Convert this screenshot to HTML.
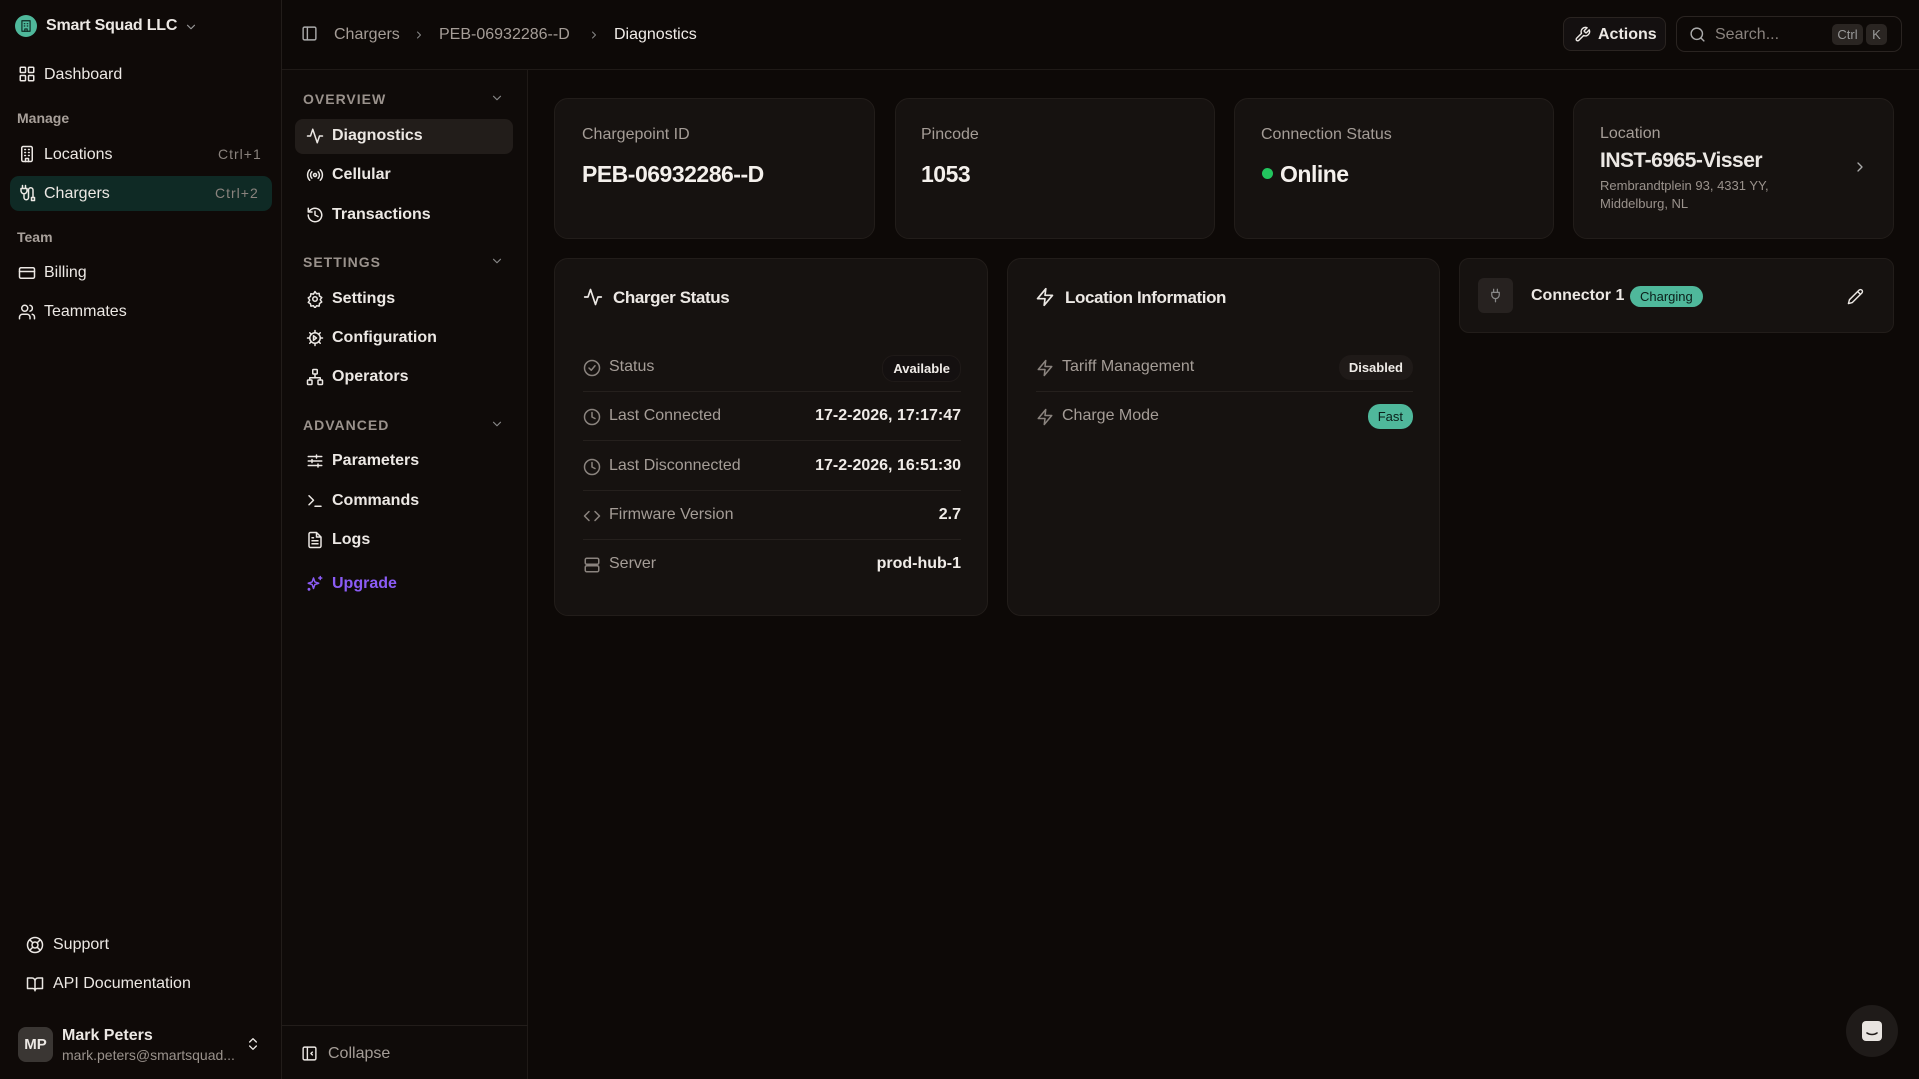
<!DOCTYPE html>
<html><head><meta charset="utf-8">
<style>
*{box-sizing:border-box;margin:0;padding:0}
html,body{width:1919px;height:1079px;overflow:hidden;background:#0d0907;font-family:"Liberation Sans",sans-serif;color:#ece8e4}
.a{position:absolute}
svg.i{position:absolute;width:18px;height:18px;fill:none;stroke:currentColor;stroke-width:2;stroke-linecap:round;stroke-linejoin:round}
.nav{font-size:16px;color:#ece8e4;white-space:nowrap}
.grp{font-size:14px;color:#a8a09a;font-weight:bold}
.sec{font-size:14px;color:#9a928c;letter-spacing:1px;font-weight:bold}
.kbd{font-size:14px;color:#8a837e;letter-spacing:1px}
.card{position:absolute;background:#161210;border:1px solid #221d1a;border-radius:14px}
.lbl{position:absolute;font-size:16px;color:#a59d97}
.val{position:absolute;font-size:23px;font-weight:bold;color:#f4f0ec;letter-spacing:-0.5px}
.row{position:absolute;left:28px;right:26px;height:49px;border-bottom:1px solid #25201d}
.row .t{position:absolute;left:26px;top:15px;font-size:16px;color:#a59d97}
.row svg.i{left:0;top:16px;color:#8a837e}
.row .v{position:absolute;right:0;top:15px;font-size:16px;font-weight:bold;color:#f0ece8}
.badge{position:absolute;right:0;top:12px;font-size:13px;font-weight:bold;padding:5px 10px;border-radius:12px;background:#1f1a18;color:#f0ece8}
</style></head><body>
<!-- sidebar 1 -->
<div class="a" style="left:0;top:0;width:282px;height:1079px;background:#0f0a08;border-right:1px solid #221d1a"></div>
<div class="a" style="left:15px;top:15px;width:22px;height:22px;border-radius:50%;background:#4fb89b"></div>
<svg class="i" style="left:19px;top:19px;width:14px;height:14px;color:#0f2a24" viewBox="0 0 24 24"><rect x="5" y="3" width="14" height="18"/><path d="M9 8h1M14 8h1M9 12h1M14 12h1M10 21v-4h4v4"/></svg>
<div class="a" style="left:46px;top:17px;font-size:16px;font-weight:bold;letter-spacing:-0.2px">Smart Squad LLC</div>
<svg class="i" style="left:184px;top:20px;width:14px;height:14px;color:#999" viewBox="0 0 24 24"><path d="M6 9l6 6 6-6"/></svg>

<svg class="i" style="left:18px;top:65px" viewBox="0 0 24 24"><rect x="3" y="3" width="7" height="7" rx="1"/><rect x="14" y="3" width="7" height="7" rx="1"/><rect x="3" y="14" width="7" height="7" rx="1"/><rect x="14" y="14" width="7" height="7" rx="1"/></svg>
<div class="a nav" style="left:44px;top:66px">Dashboard</div>
<div class="a grp" style="left:17px;top:110px">Manage</div>
<svg class="i" style="left:18px;top:145px" viewBox="0 0 24 24"><rect x="5" y="2" width="14" height="20" rx="2"/><path d="M9 6h1M14 6h1M9 10h1M14 10h1M9 14h1M14 14h1M10 22v-4h4v4"/></svg>
<div class="a nav" style="left:44px;top:146px">Locations</div>
<div class="a kbd" style="left:218px;top:146px">Ctrl+1</div>
<div class="a" style="left:10px;top:176px;width:262px;height:35px;border-radius:9px;background:#0f2a25"></div>
<svg class="i" style="left:18px;top:184px" viewBox="0 0 24 24"><path d="M6 2v4M10 2v4M4 6h8v3a4 4 0 0 1-8 0zM8 13v5a3 3 0 0 0 6 0V8a3 3 0 0 1 6 0v10M18 18h4v4h-4z"/></svg>
<div class="a nav" style="left:44px;top:185px">Chargers</div>
<div class="a kbd" style="left:215px;top:185px">Ctrl+2</div>
<div class="a grp" style="left:17px;top:229px">Team</div>
<svg class="i" style="left:18px;top:264px" viewBox="0 0 24 24"><rect x="2" y="5" width="20" height="14" rx="2"/><path d="M2 10h20"/></svg>
<div class="a nav" style="left:44px;top:264px">Billing</div>
<svg class="i" style="left:18px;top:303px" viewBox="0 0 24 24"><circle cx="9" cy="7" r="4"/><path d="M2 21v-2a4 4 0 0 1 4-4h6a4 4 0 0 1 4 4v2M16 3.1a4 4 0 0 1 0 7.8M22 21v-2a4 4 0 0 0-3-3.9"/></svg>
<div class="a nav" style="left:44px;top:303px">Teammates</div>

<svg class="i" style="left:26px;top:936px" viewBox="0 0 24 24"><circle cx="12" cy="12" r="10"/><circle cx="12" cy="12" r="4"/><path d="M5 5l4 4M15 15l4 4M15 9l4-4M5 19l4-4"/></svg>
<div class="a nav" style="left:53px;top:936px">Support</div>
<svg class="i" style="left:26px;top:975px" viewBox="0 0 24 24"><path d="M2 4h6a4 4 0 0 1 4 4v13a3 3 0 0 0-3-3H2zM22 4h-6a4 4 0 0 0-4 4v13a3 3 0 0 1 3-3h7z"/></svg>
<div class="a nav" style="left:53px;top:975px">API Documentation</div>
<div class="a" style="left:18px;top:1027px;width:35px;height:35px;border-radius:8px;background:#3a3633;font-size:15px;font-weight:bold;text-align:center;line-height:35px">MP</div>
<div class="a" style="left:62px;top:1027px;font-size:16px;font-weight:bold">Mark Peters</div>
<div class="a" style="left:62px;top:1047px;font-size:14px;color:#9a928c">mark.peters@smartsquad...</div>
<svg class="i" style="left:245px;top:1036px;width:16px;height:16px" viewBox="0 0 24 24"><path d="M7 9l5-5 5 5M7 15l5 5 5-5"/></svg>

<!-- sidebar 2 -->
<div class="a" style="left:282px;top:69px;width:246px;height:1010px;background:#0f0b09;border-right:1px solid #1f1a17"></div>
<div class="a" style="left:282px;top:1025px;width:246px;height:1px;background:#221d1a"></div>
<div class="a sec" style="left:303px;top:91px">OVERVIEW</div>
<svg class="i" style="left:490px;top:91px;width:14px;height:14px;color:#888" viewBox="0 0 24 24"><path d="M6 9l6 6 6-6"/></svg>
<div class="a" style="left:295px;top:119px;width:218px;height:35px;border-radius:8px;background:#221d1a"></div>
<svg class="i" style="left:306px;top:127px" viewBox="0 0 24 24"><path d="M22 12h-4l-3 9L9 3l-3 9H2"/></svg>
<div class="a nav" style="left:332px;top:127px;font-weight:bold">Diagnostics</div>
<svg class="i" style="left:306px;top:166px" viewBox="0 0 24 24"><circle cx="12" cy="12" r="2"/><path d="M16.2 7.8a6 6 0 0 1 0 8.5M7.8 16.2a6 6 0 0 1 0-8.5M19 5a10 10 0 0 1 0 14M5 19A10 10 0 0 1 5 5"/></svg>
<div class="a nav" style="left:332px;top:166px;font-weight:bold">Cellular</div>
<svg class="i" style="left:306px;top:206px" viewBox="0 0 24 24"><path d="M3 12a9 9 0 1 0 3-6.7L3 8M3 3v5h5M12 7v5l4 2"/></svg>
<div class="a nav" style="left:332px;top:206px;font-weight:bold">Transactions</div>
<div class="a sec" style="left:303px;top:254px">SETTINGS</div>
<svg class="i" style="left:490px;top:254px;width:14px;height:14px;color:#888" viewBox="0 0 24 24"><path d="M6 9l6 6 6-6"/></svg>
<svg class="i" style="left:306px;top:290px" viewBox="0 0 24 24"><circle cx="12" cy="12" r="3"/><path d="M12 2l2 3 3.5-.5.5 3.5 3 2-2 3 2 3-3 2-.5 3.5-3.5-.5-2 3-2-3-3.5.5L6 18.5 3 16.5l2-3-2-3 3-2L6.5 5 10 5.5z"/></svg>
<div class="a nav" style="left:332px;top:290px;font-weight:bold">Settings</div>
<svg class="i" style="left:306px;top:329px" viewBox="0 0 24 24"><circle cx="12" cy="12" r="7"/><path d="M12 2v3M12 19v3M2 12h3M19 12h3M5 5l2 2M17 17l2 2M5 19l2-2M17 7l2-2M10 9l4 3-4 3z"/></svg>
<div class="a nav" style="left:332px;top:329px;font-weight:bold">Configuration</div>
<svg class="i" style="left:306px;top:368px" viewBox="0 0 24 24"><rect x="9" y="2" width="6" height="6" rx="1"/><rect x="2" y="16" width="6" height="6" rx="1"/><rect x="16" y="16" width="6" height="6" rx="1"/><path d="M5 16v-3h14v3M12 8v5"/></svg>
<div class="a nav" style="left:332px;top:368px;font-weight:bold">Operators</div>
<div class="a sec" style="left:303px;top:417px">ADVANCED</div>
<svg class="i" style="left:490px;top:417px;width:14px;height:14px;color:#888" viewBox="0 0 24 24"><path d="M6 9l6 6 6-6"/></svg>
<svg class="i" style="left:306px;top:452px" viewBox="0 0 24 24"><path d="M3 6h18M3 12h18M3 18h18M14 4v4M8 10v4M16 16v4"/></svg>
<div class="a nav" style="left:332px;top:452px;font-weight:bold">Parameters</div>
<svg class="i" style="left:306px;top:492px" viewBox="0 0 24 24"><path d="M4 17l6-6-6-6M12 19h8"/></svg>
<div class="a nav" style="left:332px;top:492px;font-weight:bold">Commands</div>
<svg class="i" style="left:306px;top:531px" viewBox="0 0 24 24"><path d="M14 2H6a2 2 0 0 0-2 2v16a2 2 0 0 0 2 2h12a2 2 0 0 0 2-2V8zM14 2v6h6M8 13h8M8 17h8M8 9h2"/></svg>
<div class="a nav" style="left:332px;top:531px;font-weight:bold">Logs</div>
<svg class="i" style="left:306px;top:575px;color:#8b5cf6" viewBox="0 0 24 24"><path d="M10 4l1.8 5.2L17 11l-5.2 1.8L10 18l-1.8-5.2L3 11l5.2-1.8zM19 2v4M17 4h4M5 19a1 1 0 1 0 0 .1"/></svg>
<div class="a nav" style="left:332px;top:575px;font-weight:bold;color:#8b5cf6">Upgrade</div>
<svg class="i" style="left:301px;top:1045px;width:17px;height:17px" viewBox="0 0 24 24"><rect x="3" y="3" width="18" height="18" rx="2"/><path d="M9 3v18M16 10l-2 2 2 2"/></svg>
<div class="a nav" style="left:328px;top:1045px;color:#a59d97">Collapse</div>

<!-- topbar -->
<div class="a" style="left:282px;top:69px;width:1637px;height:1px;background:#1f1a17"></div>
<svg class="i" style="left:301px;top:25px;width:17px;height:17px;color:#aaa" viewBox="0 0 24 24"><rect x="3" y="3" width="18" height="18" rx="2"/><path d="M9 3v18"/></svg>
<div class="a" style="left:334px;top:26px;font-size:16px;color:#a59d97">Chargers</div>
<svg class="i" style="left:413px;top:29px;width:12px;height:12px;color:#888" viewBox="0 0 24 24"><path d="M9 6l6 6-6 6"/></svg>
<div class="a" style="left:439px;top:26px;font-size:16px;color:#a59d97">PEB-06932286--D</div>
<svg class="i" style="left:588px;top:29px;width:12px;height:12px;color:#888" viewBox="0 0 24 24"><path d="M9 6l6 6-6 6"/></svg>
<div class="a" style="left:614px;top:26px;font-size:16px;color:#f0ece8">Diagnostics</div>

<div class="a" style="left:1563px;top:17px;width:103px;height:34px;border:1px solid #2a2421;border-radius:8px;background:#141010"></div>
<svg class="i" style="left:1574px;top:26px;width:17px;height:17px" viewBox="0 0 24 24"><path d="M14.7 6.3a1 1 0 0 0 0 1.4l1.6 1.6a1 1 0 0 0 1.4 0l3.8-3.8a6 6 0 0 1-7.9 7.9l-6.9 6.9a2.1 2.1 0 0 1-3-3l6.9-6.9a6 6 0 0 1 7.9-7.9z"/></svg>
<div class="a" style="left:1598px;top:26px;font-size:16px;font-weight:bold">Actions</div>
<div class="a" style="left:1676px;top:16px;width:226px;height:36px;border:1px solid #2a2421;border-radius:9px"></div>
<svg class="i" style="left:1689px;top:26px;width:17px;height:17px;color:#aaa" viewBox="0 0 24 24"><circle cx="11" cy="11" r="8"/><path d="M21 21l-4.3-4.3"/></svg>
<div class="a" style="left:1715px;top:26px;font-size:16px;color:#8a837e">Search...</div>
<div class="a" style="left:1832px;top:24px;width:31px;height:21px;border-radius:5px;background:#2a2522;font-size:13px;color:#999;text-align:center;line-height:21px">Ctrl</div>
<div class="a" style="left:1866px;top:24px;width:21px;height:21px;border-radius:5px;background:#2a2522;font-size:13px;color:#999;text-align:center;line-height:21px">K</div>

<!-- stat cards -->
<div class="card" style="left:554px;top:98px;width:321px;height:141px"><div class="lbl" style="left:27px;top:27px">Chargepoint ID</div><div class="val" style="left:27px;top:62px">PEB-06932286--D</div></div>
<div class="card" style="left:895px;top:98px;width:320px;height:141px"><div class="lbl" style="left:25px;top:27px">Pincode</div><div class="val" style="left:25px;top:62px">1053</div></div>
<div class="card" style="left:1234px;top:98px;width:320px;height:141px"><div class="lbl" style="left:26px;top:27px">Connection Status</div><div class="a" style="left:27px;top:69px;width:11px;height:11px;border-radius:50%;background:#22c55e"></div><div class="val" style="left:45px;top:62px;font-weight:600">Online</div></div>
<div class="card" style="left:1573px;top:98px;width:321px;height:141px">
<div class="lbl" style="left:26px;top:26px">Location</div>
<div class="a" style="left:26px;top:50px;font-size:21px;font-weight:bold;letter-spacing:-0.5px">INST-6965-Visser</div>
<div class="a" style="left:26px;top:78px;font-size:13px;color:#9a928c;line-height:18px">Rembrandtplein 93, 4331 YY,<br>Middelburg, NL</div>
<svg class="i" style="left:278px;top:60px;width:16px;height:16px;color:#aaa" viewBox="0 0 24 24"><path d="M9 6l6 6-6 6"/></svg>
</div>

<!-- charger status -->
<div class="card" style="left:554px;top:258px;width:434px;height:358px">
<svg class="i" style="left:28px;top:28px;width:20px;height:20px" viewBox="0 0 24 24"><path d="M22 12h-4l-3 9L9 3l-3 9H2"/></svg>
<div class="a" style="left:58px;top:29px;font-size:17px;font-weight:bold;letter-spacing:-0.4px">Charger Status</div>
<div class="row" style="top:84px"><svg class="i" viewBox="0 0 24 24"><circle cx="12" cy="12" r="10"/><path d="M8 12l3 3 5-6"/></svg><div class="t">Status</div><div class="badge" style="background:#141010;border:1px solid #1f1a18">Available</div></div>
<div class="row" style="top:133px"><svg class="i" viewBox="0 0 24 24"><circle cx="12" cy="12" r="10"/><path d="M12 6v6l4 2"/></svg><div class="t">Last Connected</div><div class="v">17-2-2026, 17:17:47</div></div>
<div class="row" style="top:183px"><svg class="i" viewBox="0 0 24 24"><circle cx="12" cy="12" r="10"/><path d="M12 6v6l4 2"/></svg><div class="t">Last Disconnected</div><div class="v">17-2-2026, 16:51:30</div></div>
<div class="row" style="top:232px"><svg class="i" viewBox="0 0 24 24"><path d="M8 6l-6 6 6 6M16 6l6 6-6 6"/></svg><div class="t">Firmware Version</div><div class="v">2.7</div></div>
<div class="row" style="top:281px;border:none"><svg class="i" viewBox="0 0 24 24"><rect x="3" y="3" width="18" height="8" rx="2"/><rect x="3" y="13" width="18" height="8" rx="2"/></svg><div class="t">Server</div><div class="v">prod-hub-1</div></div>
</div>

<!-- location info -->
<div class="card" style="left:1007px;top:258px;width:433px;height:358px">
<svg class="i" style="left:27px;top:28px;width:20px;height:20px" viewBox="0 0 24 24"><path d="M13 2L3 14h9l-1 8 10-12h-9z"/></svg>
<div class="a" style="left:57px;top:29px;font-size:17px;font-weight:bold;letter-spacing:-0.4px">Location Information</div>
<div class="row" style="top:84px"><svg class="i" viewBox="0 0 24 24"><path d="M13 2L3 14h9l-1 8 10-12h-9z"/></svg><div class="t">Tariff Management</div><div class="badge">Disabled</div></div>
<div class="row" style="top:133px;border:none"><svg class="i" viewBox="0 0 24 24"><path d="M13 2L3 14h9l-1 8 10-12h-9z"/></svg><div class="t">Charge Mode</div><div class="badge" style="background:#4fb89b;color:#0b1f1a;font-weight:normal">Fast</div></div>
</div>

<!-- connector -->
<div class="card" style="left:1459px;top:258px;width:435px;height:75px;border-radius:10px">
<div class="a" style="left:18px;top:19px;width:35px;height:35px;border-radius:6px;background:#272220"></div>
<svg class="i" style="left:28px;top:29px;width:15px;height:15px;color:#888" viewBox="0 0 24 24"><path d="M9 2v5M15 2v5M6 7h12v4a6 6 0 0 1-12 0zM12 17v5"/></svg>
<div class="a" style="left:71px;top:28px;font-size:16px;font-weight:bold">Connector 1</div>
<div class="a" style="left:170px;top:27px;padding:3px 10px;border-radius:12px;background:#4fb89b;color:#0b1f1a;font-size:13px">Charging</div>
<svg class="i" style="left:387px;top:29px;width:17px;height:17px" viewBox="0 0 24 24"><path d="M17 3a2.8 2.8 0 1 1 4 4L7.5 20.5 2 22l1.5-5.5zM15 5l4 4"/></svg>
</div>

<!-- chat button -->
<div class="a" style="left:1846px;top:1005px;width:52px;height:52px;border-radius:50%;background:#1f1b19"></div>
<svg class="a" style="left:1860px;top:1019px;width:24px;height:24px" viewBox="0 0 24 24"><rect x="2" y="2" width="20" height="20" rx="4" fill="#e8e4e0"/><path d="M7 14c3 2 7 2 10 0" stroke="#1f1b19" stroke-width="1.6" fill="none" stroke-linecap="round"/></svg>
</body></html>
